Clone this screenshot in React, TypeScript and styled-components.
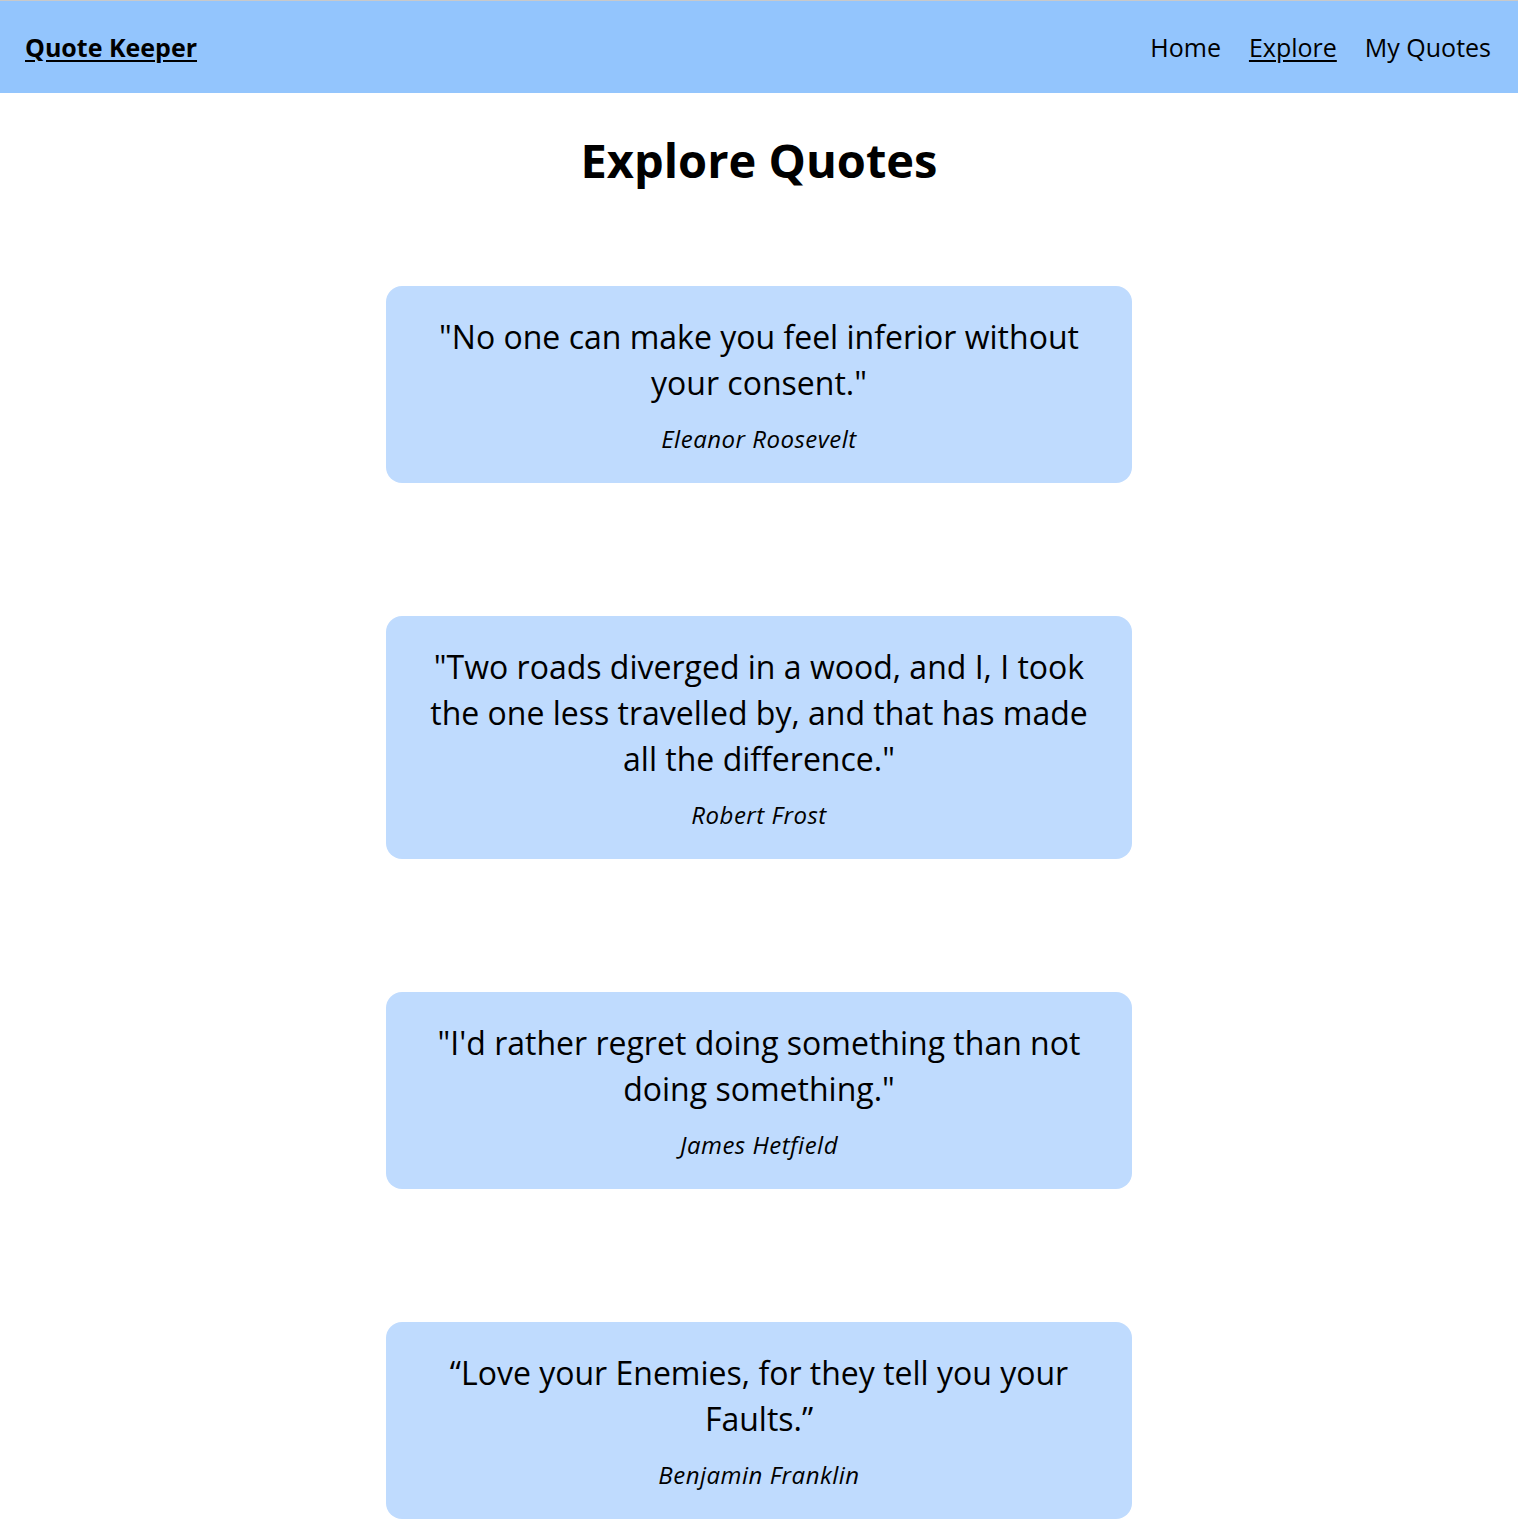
import styled, { createGlobalStyle } from "styled-components";

const GlobalStyle = createGlobalStyle`
  html, body {
    margin: 0;
    padding: 0;
    background: #ffffff;
  }
  body {
    border-top: 1px solid #c9c9c9;
    font-family: "Open Sans", "Noto Sans", "Liberation Sans", sans-serif;
    color: #000000;
  }
`;

const Header = styled.header`
  height: 92px;
  background-color: #93c5fd;
  display: flex;
  align-items: center;
  justify-content: space-between;
  padding: 0 27px 0 25px;
`;

const Brand = styled.a`
  font-size: 25px;
  font-weight: 700;
  color: #000;
  text-decoration: underline;
  text-underline-offset: 3px;
  cursor: pointer;
`;

const Nav = styled.nav`
  display: flex;
  gap: 28px;
`;

const NavLink = styled.a<{ $active?: boolean }>`
  font-size: 25px;
  color: #000;
  text-decoration: ${(p) => (p.$active ? "underline" : "none")};
  text-underline-offset: 3px;
  cursor: pointer;
`;

const Main = styled.main`
  display: flex;
  flex-direction: column;
  align-items: center;
  padding-bottom: 64px;
`;

const Title = styled.h1`
  font-size: 47px;
  font-weight: 700;
  line-height: 64px;
  margin: 35px 0 94px;
`;

const QuoteList = styled.section`
  width: 746px;
  display: flex;
  flex-direction: column;
  gap: 133px;
`;

const Card = styled.article`
  background-color: #bfdbfe;
  border-radius: 16px;
  padding: 28px 38px;
  text-align: center;
`;

const QuoteText = styled.p`
  font-size: 32px;
  line-height: 46px;
  margin: 0 0 16px;
`;

const Author = styled.p`
  font-size: 24px;
  font-style: italic;
  letter-spacing: 0.5px;
  line-height: 33px;
  margin: 0;
`;

const quotes = [
  {
    id: 1,
    text: '"No one can make you feel inferior without your consent."',
    author: "Eleanor Roosevelt",
  },
  {
    id: 2,
    text: '"Two roads diverged in a wood, and I, I took the one less travelled by, and that has made all the difference."',
    author: "Robert Frost",
  },
  {
    id: 3,
    text: "\"I'd rather regret doing something than not doing something.\"",
    author: "James Hetfield",
  },
  {
    id: 4,
    text: "\u201cLove your Enemies, for they tell you your Faults.\u201d",
    author: "Benjamin Franklin",
  },
];

export default function App() {
  return (
    <>
      <GlobalStyle />
      <Header>
        <Brand>Quote Keeper</Brand>
        <Nav>
          <NavLink>Home</NavLink>
          <NavLink $active>Explore</NavLink>
          <NavLink>My Quotes</NavLink>
        </Nav>
      </Header>
      <Main>
        <Title>Explore Quotes</Title>
        <QuoteList>
          {quotes.map((q) => (
            <Card key={q.id}>
              <QuoteText>{q.text}</QuoteText>
              <Author>{q.author}</Author>
            </Card>
          ))}
        </QuoteList>
      </Main>
    </>
  );
}
